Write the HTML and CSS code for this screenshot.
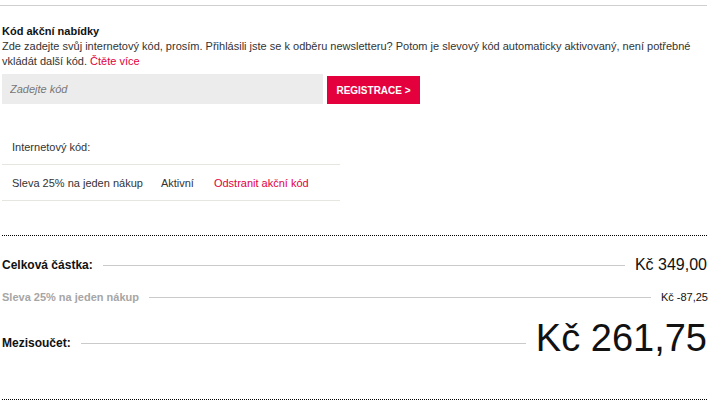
FILE: index.html
```html
<!DOCTYPE html>
<html lang="cs">
<head>
<meta charset="utf-8">
<title>Kód akční nabídky</title>
<link rel="stylesheet" href="styles.css">
</head>
<body>
<div class="top-rule"></div>
<div class="page">
  <section class="promo">
    <h3 class="promo-title">Kód akční nabídky</h3>
    <p class="promo-text">Zde zadejte svůj internetový kód, prosím. Přihlásili jste se k odběru newsletteru? Potom je slevový kód automaticky aktivovaný, není potřebné vkládát další kód. <a class="link" href="#">Čtěte více</a></p>
    <form class="promo-form">
      <input class="promo-input" type="text" placeholder="Zadejte kód">
      <button class="promo-btn" type="button">REGISTRACE &gt;</button>
    </form>
    <table class="codes">
      <tr><td colspan="3">Internetový kód:</td></tr>
      <tr><td class="c-name">Sleva 25% na jeden nákup</td><td>Aktivní</td><td><a class="link" href="#">Odstranit akční kód</a></td></tr>
    </table>
  </section>
  <section class="summary">
    <div class="sum-row total">
      <span class="sum-label">Celková částka:</span>
      <span class="sum-line"></span>
      <span class="sum-value">Kč 349,00</span>
    </div>
    <div class="sum-row discount">
      <span class="sum-label">Sleva 25% na jeden nákup</span>
      <span class="sum-line"></span>
      <span class="sum-value">Kč -87,25</span>
    </div>
    <div class="sum-row subtotal">
      <span class="sum-label">Mezisoučet:</span>
      <span class="sum-line"></span>
      <span class="sum-value">Kč 261,75</span>
    </div>
  </section>
</div>
</body>
</html>
```
FILE: styles.css
```css
html, body {
  margin: 0;
  padding: 0;
  background: #fff;
}
body {
  font-family: "Liberation Sans", Arial, sans-serif;
  font-size: 11px;
  color: #333;
  width: 713px;
}
.top-rule {
  margin-top: 5px;
  width: 707px;
  border-top: 1px solid #cfcfcf;
}
.page {
  margin-left: 2px;
  width: 705px;
}
.promo-title {
  margin: 18px 0 0;
  font-size: 11px;
  line-height: 15px;
  font-weight: bold;
  color: #111;
}
.promo-text {
  margin: 0;
  line-height: 15px;
  color: #333;
}
.link {
  color: #e2003c;
  text-decoration: none;
}
.promo-form {
  display: flex;
  align-items: flex-end;
  gap: 4px;
  margin: 5px 0 0;
}
.promo-input {
  box-sizing: border-box;
  width: 321px;
  height: 30px;
  margin: 0;
  border: 0;
  padding: 0 8px;
  background: #ececec;
  font-family: "Liberation Sans", Arial, sans-serif;
  font-size: 11px;
  color: #333;
  outline: none;
}
.promo-input::placeholder {
  color: #777;
  font-style: italic;
}
.promo-btn {
  box-sizing: border-box;
  width: 93px;
  height: 28px;
  margin: 0;
  border: 0;
  padding: 0;
  background: #e4003d;
  color: #fff;
  font-family: "Liberation Sans", Arial, sans-serif;
  font-size: 10px;
  font-weight: bold;
}
.codes {
  width: 338px;
  margin-top: 25px;
  border-collapse: collapse;
}
.codes td {
  height: 35px;
  padding: 0 10px;
  border-bottom: 1px solid #e6e6e0;
  white-space: nowrap;
  vertical-align: middle;
  color: #333;
}
.codes .c-name {
  padding-right: 8px;
}
.codes td:last-child {
  width: 100%;
}
.summary {
  margin-top: 34px;
  border-top: 1px dotted #000;
  border-bottom: 1px dotted #000;
  padding: 18px 0 34px;
}
.sum-row {
  display: flex;
  align-items: center;
  height: 22px;
}
.sum-label {
  font-weight: bold;
  font-size: 12px;
  color: #111;
  white-space: nowrap;
}
.sum-line {
  flex: 1;
  height: 0;
  border-top: 1px solid #cacaca;
  margin: 0 10px;
}
.sum-value {
  white-space: nowrap;
  color: #111;
}
.total .sum-value {
  font-size: 16px;
}
.discount {
  margin-top: 10px;
}
.discount .sum-label {
  font-size: 11px;
  color: #a6a6a6;
}
.discount .sum-value {
  font-size: 11px;
  margin-right: -1px;
}
.subtotal {
  margin-top: 13px;
  height: 44px;
}
.subtotal .sum-value {
  font-size: 38px;
  line-height: 38px;
  margin-bottom: 10px;
}
```
